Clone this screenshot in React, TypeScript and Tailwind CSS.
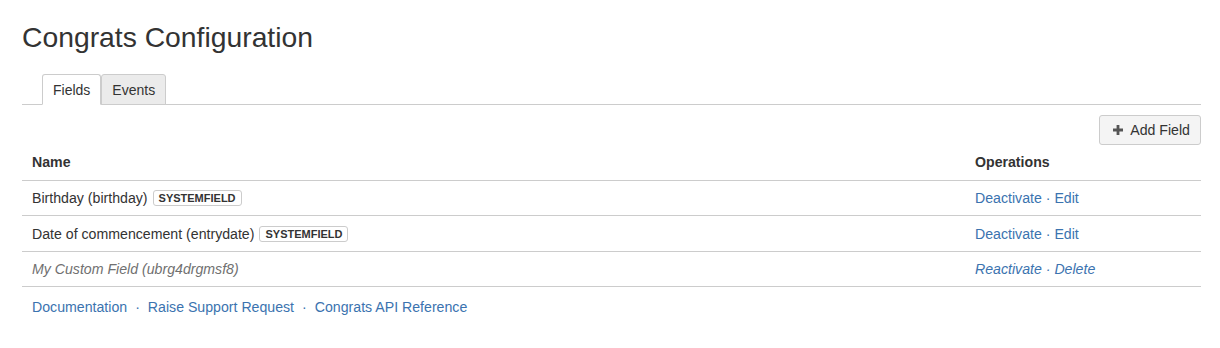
const link = "text-[#3b73af] hover:underline";

interface Field {
  name: string;
  key: string;
  system: boolean;
  active: boolean;
}

const fields: Field[] = [
  { name: "Birthday", key: "birthday", system: true, active: true },
  { name: "Date of commencement", key: "entrydate", system: true, active: true },
  { name: "My Custom Field", key: "ubrg4drgmsf8", system: false, active: false },
];

function PlusIcon() {
  return (
    <svg width="10" height="10" viewBox="0 0 10 10" className="mr-[7px]">
      <path d="M3.6 0h2.8v3.6H10v2.8H6.4V10H3.6V6.4H0V3.6h3.6z" fill="#555" />
    </svg>
  );
}

export default function App() {
  return (
    <div className="min-h-[348px] bg-white pl-[22px] pr-[19px] pt-[21px] text-[14.15px] leading-[20px] text-[#333] font-['Liberation_Sans',Arial,sans-serif]">
      <h1 className="text-[28.3px] leading-[33px] font-normal mb-[20px]">Congrats Configuration</h1>

      <ul className="flex pl-[20px] border-b border-[#ccc] text-[14px]">
        <li className="-mb-px">
          <a className="block px-[10px] pt-[5px] pb-[4px] bg-white border border-[#ccc] border-b-white rounded-t-[3px]">
            Fields
          </a>
        </li>
        <li className="-mb-px">
          <a className="block px-[10px] pt-[5px] pb-[4px] bg-[#ebebeb] border border-[#ccc] rounded-t-[3px]">
            Events
          </a>
        </li>
      </ul>

      <div className="flex justify-end mt-[10px]">
        <button className="flex items-center h-[30px] pl-[13px] pr-[10px] bg-[#f4f4f4] border border-[#ccc] rounded-[3px] text-[#333]">
          <PlusIcon />
          Add Field
        </button>
      </div>

      <table className="w-full border-collapse">
        <thead>
          <tr className="border-b border-[#ccc]">
            <th className="text-left font-bold px-[10px] pt-[7px] pb-[8px]">Name</th>
            <th className="text-left font-bold px-[10px] pt-[7px] pb-[8px] w-[236px]">Operations</th>
          </tr>
        </thead>
        <tbody>
          {fields.map((f, i) => (
            <tr key={f.key} className="border-b border-[#ccc]">
              <td className={(i === 1 ? "py-[7.5px] " : "py-[7px] ") + (f.active ? "px-[10px]" : "px-[10px] italic text-[#707070]")}>
                {f.name} ({f.key})
                {f.system && (
                  <span className="ml-[5px] inline-block align-[1px] px-[5px] border border-[#ccc] rounded-[3px] text-[11px] leading-[14px] font-bold">
                    SYSTEMFIELD
                  </span>
                )}
              </td>
              <td className={f.active ? "px-[10px]" : "px-[10px] italic"}>
                <a className={link}>{f.active ? "Deactivate" : "Reactivate"}</a>
                <span className="text-[#3b73af]"> · </span>
                <a className={link}>{f.active ? "Edit" : "Delete"}</a>
              </td>
            </tr>
          ))}
        </tbody>
      </table>

      <div className="mt-[10px] px-[10px] flex items-center">
        <a className={link}>Documentation</a>
        <span className="mx-[8px] text-[#3b73af]">·</span>
        <a className={link}>Raise Support Request</a>
        <span className="mx-[8px] text-[#3b73af]">·</span>
        <a className={link}>Congrats API Reference</a>
      </div>
    </div>
  );
}
